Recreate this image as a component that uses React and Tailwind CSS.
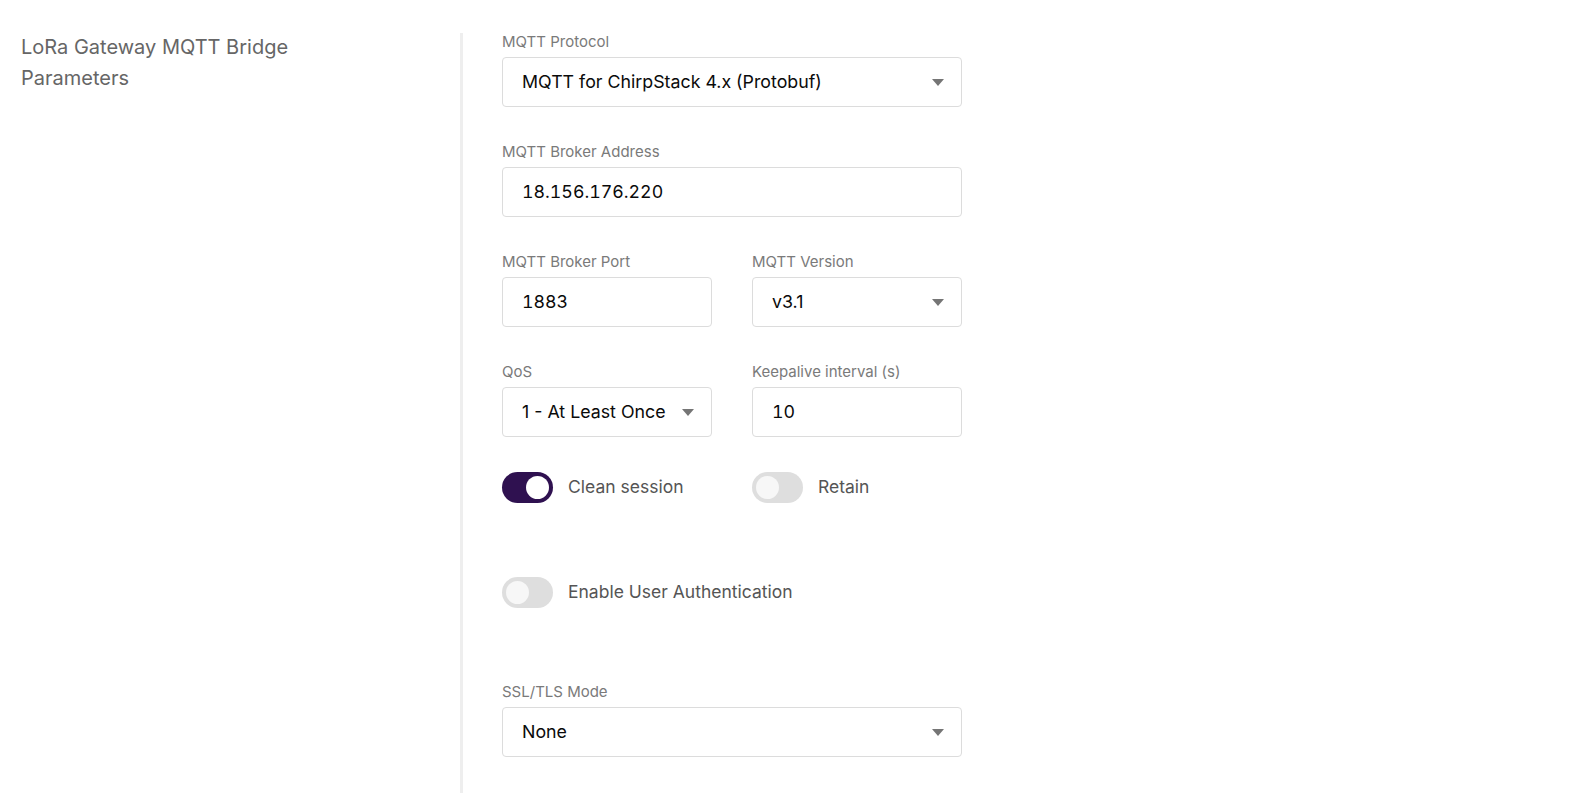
import React from 'react';

const FONT = { fontFamily: 'Inter, "Noto Sans", sans-serif' };

function Caret() {
    return (
        <svg className="w-3 h-[7px] shrink-0" viewBox="0 0 12 7" fill="#757575">
            <path d="M0 0h12L6 7z" />
        </svg>
    );
}

function Field({ label, children, className = '' }) {
    return (
        <div className={`flex flex-col ${className}`}>
            <label className="text-[15px] leading-5 text-[#7a7a7a] mb-[5px]">{label}</label>
            {children}
        </div>
    );
}

function Box({ value, select, numeric }) {
    return (
        <div className="h-[50px] rounded-[4px] border border-[#dcdcdc] bg-white flex items-center pl-[19px] pr-[17px]">
            <span className={`flex-1 text-[17.8px] text-[#0a0a0a] whitespace-nowrap ${numeric ? 'tabular-nums' : ''}`}>{value}</span>
            {select && <Caret />}
        </div>
    );
}

function Toggle({ on, label }) {
    return (
        <div className="flex items-center gap-[15px] h-[31px]">
            <div className={`w-[51px] h-[31px] shrink-0 rounded-full flex items-center px-[4px] ${on ? 'bg-[#2f1150] justify-end' : 'bg-[#dedede] justify-start'}`}>
                <div className={`w-[23px] h-[23px] rounded-full ${on ? 'bg-white' : 'bg-[#f7f7f7]'}`} />
            </div>
            <span className="text-[17.5px] text-[#555]">{label}</span>
        </div>
    );
}

export default function App() {
    return (
        <div className="h-[793px] overflow-hidden bg-white flex" style={FONT}>
            {/* Section title */}
            <div className="w-[460px] shrink-0 pl-[21px] pt-[32px]">
                <h2 className="text-[20px] leading-[30.5px] text-[#666] w-[300px]">LoRa Gateway MQTT Bridge Parameters</h2>
            </div>

            {/* Divider */}
            <div className="w-[3px] shrink-0 bg-[#eeeeee] mt-[33px]" />

            {/* Form */}
            <div className="pl-[39px] pt-[32px] w-[499px] shrink-0 flex flex-col">
                <Field label="MQTT Protocol">
                    <Box value="MQTT for ChirpStack 4.x (Protobuf)" select />
                </Field>

                <Field label="MQTT Broker Address" className="mt-[35px]">
                    <Box value="18.156.176.220" numeric />
                </Field>

                <div className="grid grid-cols-2 gap-x-[40px] mt-[35px]">
                    <Field label="MQTT Broker Port">
                        <Box value="1883" numeric />
                    </Field>
                    <Field label="MQTT Version">
                        <Box value="v3.1" select />
                    </Field>
                </div>

                <div className="grid grid-cols-2 gap-x-[40px] mt-[35px]">
                    <Field label="QoS">
                        <Box value="1 - At Least Once" select />
                    </Field>
                    <Field label="Keepalive interval (s)">
                        <Box value="10" numeric />
                    </Field>
                </div>

                <div className="grid grid-cols-2 gap-x-[40px] mt-[35px]">
                    <Toggle on label="Clean session" />
                    <Toggle label="Retain" />
                </div>

                <div className="mt-[74px]">
                    <Toggle label="Enable User Authentication" />
                </div>

                <Field label="SSL/TLS Mode" className="mt-[74px]">
                    <Box value="None" select />
                </Field>
            </div>
        </div>
    );
}
